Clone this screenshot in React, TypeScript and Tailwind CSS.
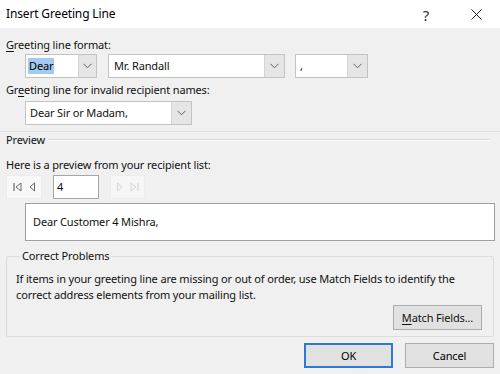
import React from "react";

const Chevron = () => (
  <svg width="9" height="6" viewBox="0 0 9 6" fill="none">
    <polyline points="0.5,0.8 4.5,4.8 8.5,0.8" stroke="#606060" strokeWidth="1" />
  </svg>
);

function Combo({ width, btn, children }: { width: number; btn: number; children: React.ReactNode }) {
  return (
    <div className="flex h-[24px] border border-[#c3c3c3] bg-white" style={{ width }}>
      <div className="flex flex-1 items-center pl-[2px] overflow-hidden">{children}</div>
      <div className="flex h-full items-center justify-center bg-[#e5e5e5] border-l border-[#d4d4d4]" style={{ width: btn }}>
        <Chevron />
      </div>
    </div>
  );
}

export default function App() {
  return (
    <div
      className="w-[500px] h-[374px] bg-[#f0f0f0] flex flex-col text-[11px] leading-[16px] tracking-[-0.15px] text-[#111] overflow-hidden"
      style={{ fontFamily: '"Noto Sans", "Segoe UI", sans-serif' }}
    >
      {/* Title bar */}
      <div className="h-[28px] bg-white flex items-center pl-[6px] shrink-0">
        <span className="text-[12px] text-black">Insert Greeting Line</span>
        <div className="flex-1" />
        <span className="text-[15px] text-[#333] mr-[42px] mt-[2px]">?</span>
        <svg width="11" height="11" viewBox="0 0 11 11" className="mr-[18px]">
          <line x1="0.5" y1="0.5" x2="10.5" y2="10.5" stroke="#222" strokeWidth="1" />
          <line x1="10.5" y1="0.5" x2="0.5" y2="10.5" stroke="#222" strokeWidth="1" />
        </svg>
      </div>

      <div className="flex flex-col px-[6px]">
        <div className="mt-[9px]">
          <span className="underline underline-offset-2">G</span>reeting line format:
        </div>
        <div className="flex ml-[19px] mt-[1px]">
          <Combo width={72} btn={18}>
            <span className="bg-[#a4cbef] px-[1px] text-black">Dear</span>
          </Combo>
          <div className="w-[11px]" />
          <Combo width={177} btn={20}>
            <span className="pl-[3px]">Mr. Randall</span>
          </Combo>
          <div className="w-[10px]" />
          <Combo width={73} btn={20}>
            <span className="pl-[2px]">,</span>
          </Combo>
        </div>

        <div className="mt-[4px]">
          Gr<span className="underline underline-offset-2">e</span>eting line for invalid recipient names:
        </div>
        <div className="ml-[19px] mt-[3px]">
          <Combo width={167} btn={20}>
            <span className="pl-[2px]">Dear Sir or Madam,</span>
          </Combo>
        </div>

        <div className="mt-[6px] -mx-[6px] h-px bg-[#e2e2e2]" />
        <div className="flex items-center">
          <span>Preview</span>
          <div className="flex-1 ml-[3px] mr-[4px] flex flex-col">
            <div className="h-px bg-[#dadada]" />
            <div className="h-px bg-white" />
          </div>
        </div>

        <div className="mt-[9px]">Here is a preview from your recipient list:</div>
        <div className="flex mt-[2px] h-[24px]">
          <div className="w-[36px] h-full bg-[#f8f8f8] border border-[#ececec] flex items-center justify-center gap-[7px]">
            <svg width="9" height="10" viewBox="0 0 9 10">
              <line x1="1" y1="1" x2="1" y2="9" stroke="#6a6a6a" strokeWidth="1.2" />
              <polygon points="8,1 3,5 8,9" fill="none" stroke="#6a6a6a" strokeWidth="1" />
            </svg>
            <svg width="6" height="10" viewBox="0 0 6 10">
              <polygon points="5.5,1 1,5 5.5,9" fill="none" stroke="#6a6a6a" strokeWidth="1" />
            </svg>
          </div>
          <div className="w-[11px]" />
          <div className="w-[46px] h-full bg-white border border-[#a6a6a6] flex items-center pl-[3px]">4</div>
          <div className="w-[11px]" />
          <div className="w-[35px] h-full bg-[#f6f6f6] border border-[#ededed] flex items-center justify-center gap-[7px]">
            <svg width="6" height="10" viewBox="0 0 6 10">
              <polygon points="0.5,1 5,5 0.5,9" fill="none" stroke="#d6d6d6" strokeWidth="1" />
            </svg>
            <svg width="9" height="10" viewBox="0 0 9 10">
              <polygon points="1,1 6,5 1,9" fill="none" stroke="#d6d6d6" strokeWidth="1" />
              <line x1="8" y1="1" x2="8" y2="9" stroke="#d6d6d6" strokeWidth="1.2" />
            </svg>
          </div>
        </div>

        <div className="ml-[19px] mt-[4px] w-[470px] h-[38px] bg-white border border-[#a0a0a0] flex items-center pl-[7px]">
          Dear Customer 4 Mishra,
        </div>

        <fieldset className="mt-[7px] border border-[#dcdcdc] rounded-[2px] px-[9px] pb-[6px]">
          <legend className="ml-[4px] px-[2px]">Correct Problems</legend>
          <div className="mt-[7px] whitespace-nowrap">
            If items in your greeting line are missing or out of order, use Match Fields to identify the
            <br />
            correct address elements from your mailing list.
          </div>
          <div className="flex justify-end mt-[2px] pr-[2px]">
            <button className="w-[89px] h-[25px] bg-[#e1e1e1] border border-[#adadad] text-[#111]">
              <span className="underline underline-offset-2">M</span>atch Fields...
            </button>
          </div>
        </fieldset>

        <div className="flex justify-end mt-[6px] gap-[12px]">
          <button className="w-[89px] h-[25px] bg-[#e1e1e1] border-2 border-[#2c7ad6] text-black">OK</button>
          <button className="w-[89px] h-[25px] bg-[#e1e1e1] border border-[#adadad] text-black">Cancel</button>
        </div>
      </div>
    </div>
  );
}
